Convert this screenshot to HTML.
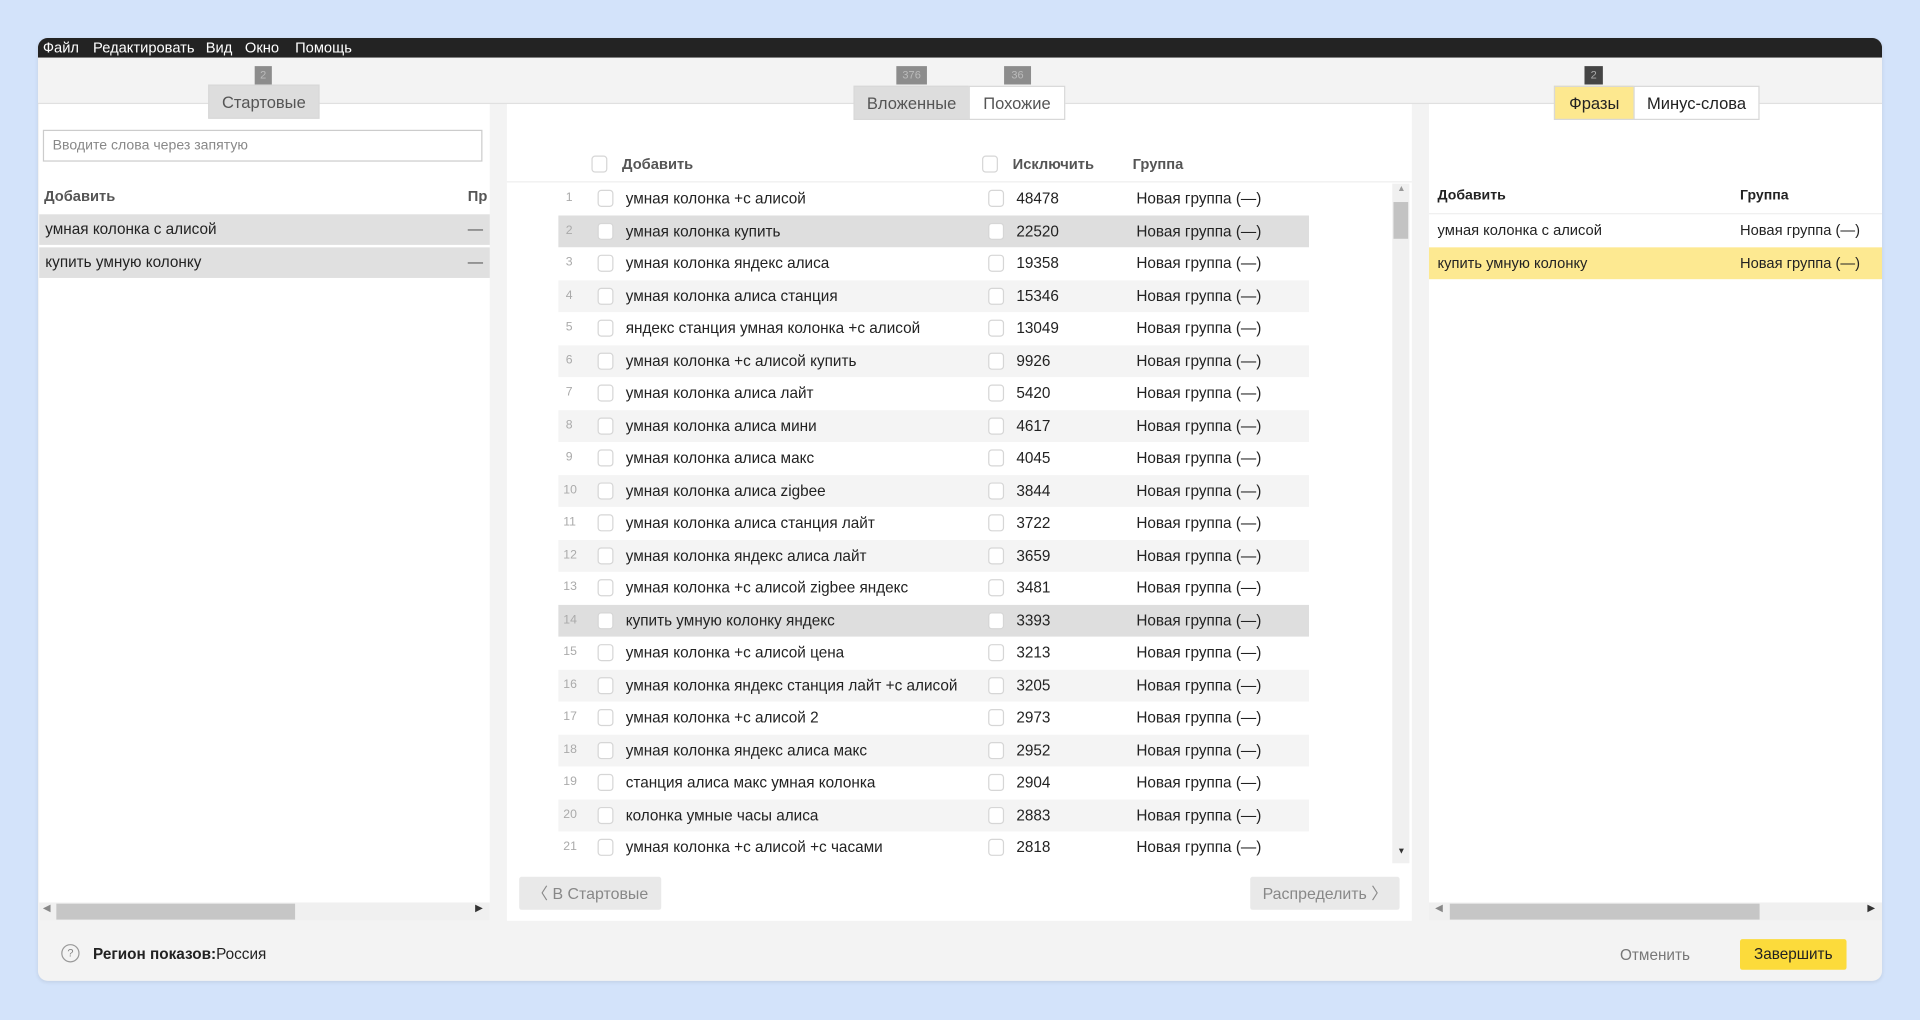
<!DOCTYPE html>
<html><head><meta charset="utf-8"><style>
*{box-sizing:border-box;margin:0;padding:0}
html,body{width:1920px;height:1020px;overflow:hidden;background:#d3e3fa}
#w{position:absolute;left:0;top:0;width:1568px;height:833px;transform:scale(1.22449);transform-origin:0 0;font-family:"Liberation Sans",sans-serif;color:#222}
.a{position:absolute}
.win{left:31px;top:31px;width:1506px;height:770px;background:#f3f3f3;border-radius:8px;overflow:hidden;box-shadow:0 1px 3px rgba(0,0,0,.08)}
.menu{left:0;top:0;width:1506px;height:16px;background:#232323;color:#fff;font-size:12px;line-height:16px}
.menu span{position:absolute;top:0}
.tb{left:0;top:16px;width:1506px;height:38px;border-bottom:1px solid #e0e0e0}
.panel{background:#fff}
.badge{background:#8c8c8c;color:#bbb;font-size:9px;text-align:center;height:15px;line-height:15px}
.tab{height:28px;line-height:28px;font-size:13.5px;text-align:center;border:1px solid #d8d8d8;color:#555}
.cb{position:absolute;width:13px;height:14px;border:1px solid #d6d6d6;border-radius:3px;background:#fff}
.row{position:absolute;left:0;width:740px;height:26.5px;font-size:12.5px;line-height:26.5px}
.row .bg{position:absolute;left:42px;width:613px;top:0;height:26.5px}
.row span{position:absolute;top:0}
.num{color:#aaa;font-size:10px}
.btn{background:#e9e9e9;color:#888;font-size:13px;height:27px;line-height:27px;text-align:center;border-radius:2px}
</style></head><body><div id="w">
<div class="a win">
 <div class="a menu"><span style="left:4px">Файл</span><span style="left:45px">Редактировать</span><span style="left:137px">Вид</span><span style="left:169px">Окно</span><span style="left:210px">Помощь</span></div>
 <div class="a tb"></div>
 <!-- left panel -->
 <div class="a panel" style="left:1px;top:54px;width:368px;height:667px"></div>
 <div class="a" style="left:4px;top:75px;width:359px;height:26px;border:1px solid #ccc;background:#fff;font-size:11.5px;color:#888;line-height:25px;padding-left:7px">Вводите слова через запятую</div>
 <div class="a" style="left:5px;top:122px;font-size:12px;font-weight:bold;color:#555">Добавить</div>
 <div class="a" style="left:351px;top:122px;font-size:12px;font-weight:bold;color:#555">Пр</div>
 <div class="a" style="left:1px;top:144px;width:368px;height:25px;background:#e0e0e0;font-size:12.5px;line-height:25px;padding-left:5px">умная колонка с алисой<span style="position:absolute;left:350px;color:#555">—</span></div>
 <div class="a" style="left:1px;top:171px;width:368px;height:25px;background:#e0e0e0;font-size:12.5px;line-height:25px;padding-left:5px">купить умную колонку<span style="position:absolute;left:350px;color:#555">—</span></div>
 <div class="a" style="left:1px;top:706px;width:368px;height:15px;background:#f0f0f0"></div>
 <div class="a" style="left:15px;top:707px;width:195px;height:13px;background:#c6c6c6"></div>
 <div class="a" style="left:4px;top:706px;font-size:8px;color:#888">◀</div>
 <div class="a" style="left:357px;top:706px;font-size:8px;color:#333">▶</div>
 <div class="a badge" style="left:177px;top:23px;width:14px">2</div>
 <div class="a tab" style="left:139px;top:38px;width:91px;background:#ddd">Стартовые</div>
 <!-- middle panel -->
 <div class="a panel" style="left:383px;top:54px;width:739px;height:667px">
  <div class="cb" style="left:69px;top:42px"></div>
  <div class="a" style="left:94px;top:42px;font-size:12px;font-weight:bold;color:#555">Добавить</div>
  <div class="cb" style="left:388px;top:42px"></div>
  <div class="a" style="left:413px;top:42px;font-size:12px;font-weight:bold;color:#555">Исключить</div>
  <div class="a" style="left:511px;top:42px;font-size:12px;font-weight:bold;color:#555">Группа</div>
  <div class="a" style="left:0;top:63px;width:739px;height:1px;background:#eee"></div>
  <div class="a" style="left:0;top:64px;width:722px;height:555px;overflow:hidden" id="rows">
ROWS
  </div>
  <div class="a" style="left:723px;top:65px;width:14px;height:555px;background:#f0f0f0"></div>
  <div class="a" style="left:724px;top:80px;width:12px;height:30px;background:#c3c3c3"></div>
  <div class="a" style="left:727px;top:66px;font-size:7px;color:#999">▲</div>
  <div class="a" style="left:727px;top:607px;font-size:7px;color:#333">▼</div>
  <div class="a btn" style="left:10px;top:631px;width:116px">〈 В Стартовые</div>
  <div class="a btn" style="left:607px;top:631px;width:122px">Распределить 〉</div>
 </div>
 <div class="a badge" style="left:701px;top:23px;width:25px">376</div>
 <div class="a badge" style="left:789px;top:23px;width:22px">36</div>
 <div class="a tab" style="left:666px;top:39px;width:95px;background:#ddd">Вложенные</div>
 <div class="a tab" style="left:760px;top:39px;width:79px;background:#fff">Похожие</div>
 <!-- right panel -->
 <div class="a panel" style="left:1136px;top:54px;width:370px;height:667px"></div>
 <div class="a" style="left:1143px;top:123px;font-size:11.5px;font-weight:bold">Добавить</div>
 <div class="a" style="left:1390px;top:123px;font-size:11.5px;font-weight:bold">Группа</div>
 <div class="a" style="left:1136px;top:143px;width:370px;height:1px;background:#f0f0f0"></div>
 <div class="a" style="left:1136px;top:144px;width:370px;height:26px;font-size:12px;line-height:26px;padding-left:7px">умная колонка с алисой<span style="position:absolute;left:254px">Новая группа (—)</span></div>
 <div class="a" style="left:1136px;top:171px;width:370px;height:26px;background:#fde991;font-size:12px;line-height:26px;padding-left:7px">купить умную колонку<span style="position:absolute;left:254px">Новая группа (—)</span></div>
 <div class="a" style="left:1136px;top:706px;width:370px;height:15px;background:#f0f0f0"></div>
 <div class="a" style="left:1153px;top:707px;width:253px;height:13px;background:#c6c6c6"></div>
 <div class="a" style="left:1141px;top:706px;font-size:8px;color:#888">◀</div>
 <div class="a" style="left:1494px;top:706px;font-size:8px;color:#333">▶</div>
 <div class="a badge" style="left:1263px;top:23px;width:15px;background:#444;color:#aaa">2</div>
 <div class="a tab" style="left:1238px;top:39px;width:66px;background:#fde88f;color:#222">Фразы</div>
 <div class="a tab" style="left:1303px;top:39px;width:103px;background:#fff;color:#222">Минус-слова</div>
 <!-- footer -->
 <div class="a" style="left:19px;top:740px;width:15px;height:15px;border:1.5px solid #999;border-radius:50%;font-size:9px;color:#888;text-align:center;line-height:12px">?</div>
 <div class="a" style="left:45px;top:741px;font-size:12.5px"><b>Регион показов:</b>Россия</div>
 <div class="a" style="left:1292px;top:742px;font-size:12.5px;color:#777">Отменить</div>
 <div class="a" style="left:1390px;top:736px;width:87px;height:25px;background:#fcdb3b;border-radius:2px;font-size:12.5px;line-height:25px;text-align:center">Завершить</div>
</div>
</div>
<script>
var d=[["умная колонка +с алисой","48478"],["умная колонка купить","22520"],["умная колонка яндекс алиса","19358"],["умная колонка алиса станция","15346"],["яндекс станция умная колонка +с алисой","13049"],["умная колонка +с алисой купить","9926"],["умная колонка алиса лайт","5420"],["умная колонка алиса мини","4617"],["умная колонка алиса макс","4045"],["умная колонка алиса zigbee","3844"],["умная колонка алиса станция лайт","3722"],["умная колонка яндекс алиса лайт","3659"],["умная колонка +с алисой zigbee яндекс","3481"],["купить умную колонку яндекс","3393"],["умная колонка +с алисой цена","3213"],["умная колонка яндекс станция лайт +с алисой","3205"],["умная колонка +с алисой 2","2973"],["умная колонка яндекс алиса макс","2952"],["станция алиса макс умная колонка","2904"],["колонка умные часы алиса","2883"],["умная колонка +с алисой +с часами","2818"]];
var h="";d.forEach(function(r,i){var n=i+1;var bg=(n==2||n==14)?"#dedede":(n%2==0?"#f4f4f4":"#fff");
h+='<div class="row" style="top:'+(i*26.5)+'px"><div class="bg" style="background:'+bg+'"></div><span class="num" style="left:'+(n<10?48:46)+'px">'+n+'</span><div class="cb" style="left:74px;top:6px"></div><span style="left:97px">'+r[0]+'</span><div class="cb" style="left:393px;top:6px"></div><span style="left:416px">'+r[1]+'</span><span style="left:514px">Новая группа (—)</span></div>';});
document.getElementById("rows").innerHTML=h;
</script>
</body></html>
